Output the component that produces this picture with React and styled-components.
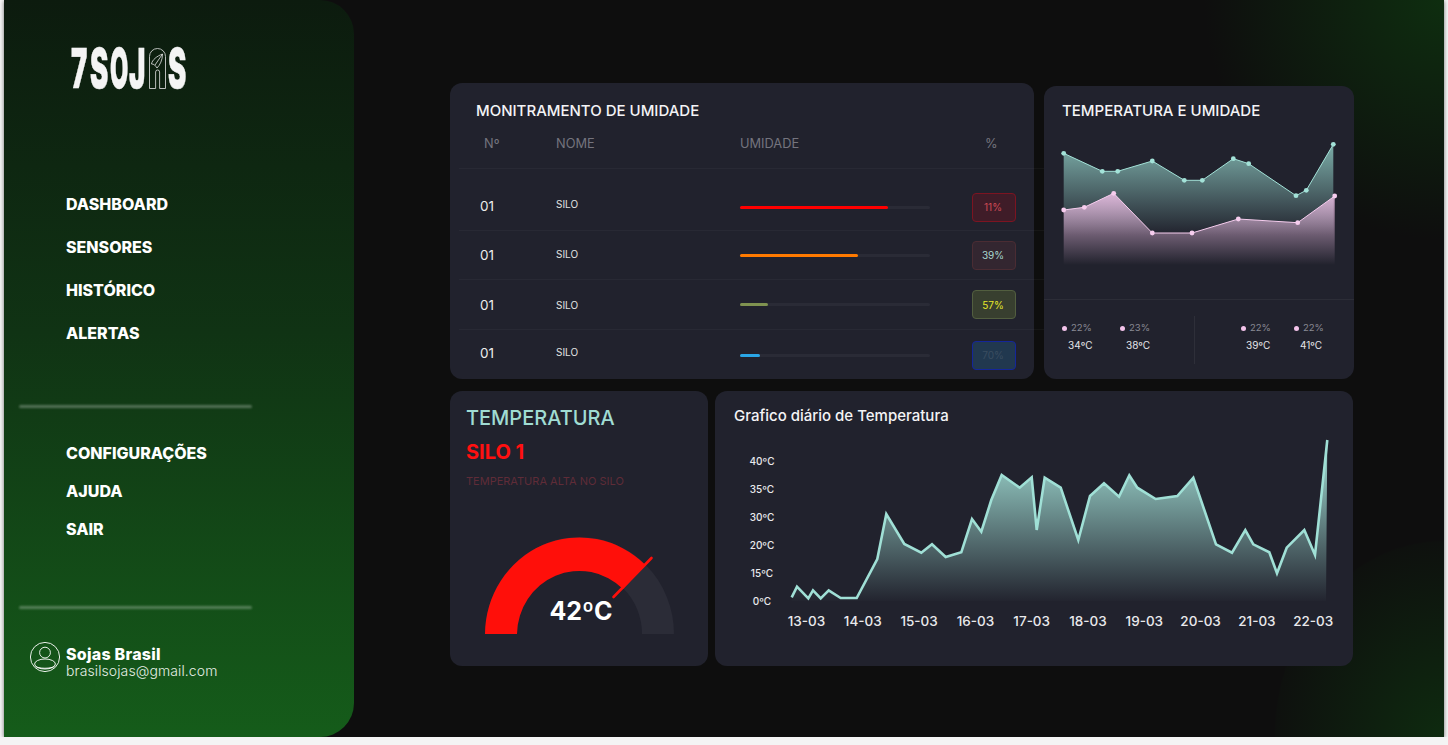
import React from 'react';
import styled, { createGlobalStyle } from 'styled-components';

const GlobalStyle = createGlobalStyle`
  html, body {
    margin: 0;
    padding: 0;
    background: #f4f4f4;
    overflow: hidden;
  }
  body {
    font-family: Inter, "Liberation Sans", sans-serif;
  }
`;

const Frame = styled.div`
  display: flex;
  width: 1440px;
  height: 737px;
  margin-left: 4px;
  box-shadow: 0 1px 4px rgba(0, 0, 0, .55);
  background:
    radial-gradient(circle at 100% 0, rgba(14, 58, 16, .72) 0, rgba(14, 58, 16, 0) 240px),
    radial-gradient(170px 197px at 100% 100%, rgba(14, 52, 16, .75) 0, rgba(14, 52, 16, .07) 99%, rgba(14, 52, 16, 0) 100%),
    #0e0e0e;
`;

const Sidebar = styled.aside`
  flex: none;
  width: 350px;
  height: 737px;
  padding-top: 48px;
  box-sizing: border-box;
  border-radius: 0 34px 34px 0;
  background: linear-gradient(180deg, #0c1b0e 0%, #103314 45%, #155c1a 100%);
`;

const Logo = styled.div`
  display: flex;
  gap: 2.4px;
  margin-left: 67px;
  height: 41px;
`;

const LogoLetter = styled.span`
  display: block;
  width: 17px;
  height: 41px;
  font: 900 55px/41px Inter, sans-serif;
  color: #f4f4f4;
  -webkit-text-stroke: .5px #f4f4f4;
  transform: scaleX(${p => p.$sx});
  transform-origin: 0 50%;
`;

const Nav = styled.nav`
  display: flex;
  flex-direction: column;
  gap: ${p => p.$gap}px;
  margin: ${p => p.$top}px 0 0 62px;
`;

const NavItem = styled.a`
  font-size: 16px;
  line-height: 22px;
  font-weight: 800;
  color: #fff;
`;

const SideRule = styled.div`
  width: 233px;
  height: 3px;
  margin: ${p => p.$top}px 0 0 15px;
  border-radius: 2px;
  background: rgba(255, 255, 255, .28);
  filter: blur(1px);
`;

const User = styled.div`
  display: flex;
  align-items: flex-start;
  gap: 6px;
  margin: 33px 0 0 26px;
`;

const UserText = styled.div`
  display: flex;
  flex-direction: column;
  margin-top: 4px;
`;

const UserName = styled.div`
  font-size: 16px;
  line-height: 16px;
  font-weight: 800;
  letter-spacing: .25px;
  color: #fff;
`;

const UserMail = styled.div`
  font-size: 14px;
  line-height: 17px;
  font-weight: 300;
  letter-spacing: .1px;
  color: #e6efe6;
`;

const Main = styled.main`
  display: flex;
  flex-direction: column;
  padding: 83px 0 0 96px;
`;

const Row = styled.div`
  display: flex;
  align-items: flex-end;
  gap: ${p => p.$gap}px;
  margin-top: ${p => p.$top || 0}px;
`;

const Card = styled.section`
  width: ${p => p.$w}px;
  height: ${p => p.$h}px;
  box-sizing: border-box;
  border-radius: 12px;
  background: #21222d;
`;

const CardTitle = styled.h2`
  margin: 0;
  padding: ${p => p.$pad};
  font-size: ${p => p.$size || 15}px;
  line-height: 18px;
  font-weight: 500;
  color: #f4f4f6;
`;

const TableRow = styled.div`
  display: grid;
  grid-template-columns: 97px 184px 232px 44px;
  align-items: center;
  width: 589px;
  height: ${p => p.$h}px;
  box-sizing: border-box;
  margin-left: 9px;
  padding: ${p => p.$pad || 0}px 0 ${p => p.$padBottom || 0}px;
  border-bottom: ${p => (p.$last ? 'none' : '1px solid rgba(255, 255, 255, .035)')};
`;

const HeadCell = styled.div`
  padding-left: ${p => p.$pad || 0}px;
  font-size: 12.8px;
  color: #74747e;
`;

const NumberCell = styled.div`
  position: relative;
  top: ${p => p.$dy}px;
  padding-left: 21px;
  font-size: 13.5px;
  color: #ececec;
`;

const NameCell = styled.div`
  position: relative;
  top: ${p => p.$dy}px;
  font-size: 10px;
  color: #e2e2e2;
`;

const BarTrack = styled.div`
  width: 190px;
  height: 3px;
  border-radius: 2px;
  background: #2a2b36;
`;

const BarFill = styled.div`
  width: ${p => p.$w}px;
  height: 3px;
  border-radius: 2px;
  background: ${p => p.$color};
`;

const Badge = styled.div`
  display: flex;
  align-items: center;
  justify-content: center;
  width: 44px;
  height: 29px;
  box-sizing: border-box;
  padding-right: 2px;
  border: 1px solid ${p => p.$border};
  border-radius: 4px;
  font-size: 10px;
  color: ${p => p.$color};
  background: ${p => p.$bg};
`;

const ChartSvg = styled.svg`
  display: block;
  margin-top: ${p => p.$top}px;
`;

const Legend = styled.div`
  display: flex;
  height: 80px;
  box-sizing: border-box;
  padding: 16px 0 0 18px;
  border-top: 1px solid rgba(255, 255, 255, .05);
`;

const LegendItem = styled.div`
  width: ${p => p.$w}px;
  padding-top: 5px;
`;

const LegendTop = styled.div`
  display: flex;
  align-items: center;
  gap: 4px;
  font-size: 9.5px;
  line-height: 14px;
  color: #8a8a94;
`;

const Dot = styled.i`
  width: 5px;
  height: 5px;
  border-radius: 50%;
  background: #f3c3ea;
`;

const LegendTemp = styled.div`
  margin: 3px 0 0 ${p => p.$pad}px;
  font-size: 10px;
  line-height: 14px;
  color: #e4e4e8;
`;

const LegendRule = styled.div`
  width: 1px;
  height: 48px;
  margin-right: 46px;
  background: rgba(255, 255, 255, .06);
`;

const GaugeHeading = styled.h2`
  margin: 0;
  padding: 15px 0 0 16px;
  font-size: 20px;
  line-height: 24px;
  font-weight: 500;
  color: #a0dcd3;
`;

const SiloName = styled.div`
  margin: 10px 0 0 16px;
  font-size: 20px;
  line-height: 24px;
  font-weight: 700;
  color: #ff1010;
`;

const SiloNote = styled.div`
  margin: 10px 0 0 16px;
  font-size: 11px;
  line-height: 14px;
  color: #5f2c38;
`;

const GaugeWrap = styled.div`
  position: relative;
  margin-top: 37px;
`;

const GaugeValue = styled.span`
  position: absolute;
  left: 131px;
  top: 86px;
  transform: translate(-50%, -50%);
  font-size: 25px;
  font-weight: 700;
  color: #fff;
`;

const AxisText = styled.text`
  font-family: Inter, sans-serif;
  font-size: ${p => p.$size}px;
  font-weight: 500;
  fill: #e9e9ec;
  text-anchor: middle;
`;

const toLine = pts => pts.map(p => p.join(',')).join(' ');

const rows = [
  { h: 62, pad: 15, numDy: -1, dy: -3, fill: 148, color: '#ff0000', label: '11%', badge: { bg: '#3f1c28', border: '#7c1421', text: '#d04a55' } },
  { h: 49, pad: 0, numDy: 0, dy: -1, fill: 118, color: '#ff7a00', label: '39%', badge: { bg: '#332630', border: '#4a2c33', text: '#a9d6cf' } },
  { h: 50, pad: 0, numDy: 0, dy: 0, fill: 28, color: '#7f9250', label: '57%', badge: { bg: '#383f2f', border: '#525e3f', text: '#e4e82a' } },
  { h: 50, pad: 0, numDy: -2, dy: -3, fill: 20, color: '#2aa6e6', label: '70%', badge: { bg: '#21384f', border: '#14269a', text: '#3a4d60' }, last: true },
];

const teal = [[1063.7, 153.3], [1102.3, 171.3], [1117.7, 171.3], [1152.3, 161], [1184.3, 180.3], [1202.3, 180.3], [1233.3, 158.7], [1248.7, 163.7], [1296, 195.7], [1306.3, 190.3], [1333.3, 144.3]];
const pink = [[1063.7, 210], [1084.3, 207.3], [1113.7, 193.3], [1152.3, 233], [1192, 233], [1238.3, 219], [1297.7, 222.7], [1334.7, 196]];

const daily = [
  [791.7, 597.3], [797, 586.7], [808.3, 598.3], [813, 590.3], [820.7, 598.3], [828.7, 590.3], [840.7, 598], [856.7, 598],
  [877.3, 559], [886.3, 514], [904.3, 544], [921.3, 552.7], [932, 544.3], [945.7, 557], [961.3, 552.3], [972, 519],
  [981.3, 531.7], [991.3, 500], [1001.7, 475], [1019.7, 487.7], [1031.7, 477.3], [1036.7, 530], [1044.7, 477.7],
  [1060.7, 487.7], [1078.3, 540], [1090, 496], [1104, 483.3], [1119, 496.7], [1129.3, 475.3], [1137.3, 487.7],
  [1155.7, 499], [1177.3, 496], [1193.3, 477.7], [1216, 544.3], [1232, 552.7], [1245.3, 530], [1253.3, 544.3],
  [1269.3, 552.3], [1277, 573.3], [1286.7, 547.7], [1304.3, 530], [1315, 555], [1327.3, 440],
];

const yTicks = [['40ºC', 461], ['35ºC', 489], ['30ºC', 517], ['20ºC', 545], ['15ºC', 573], ['0ºC', 601]];
const xTicks = ['13-03', '14-03', '15-03', '16-03', '17-03', '18-03', '19-03', '20-03', '21-03', '22-03'];

function LeafBlock() {
  return (
    <svg width="17" height="41" viewBox="0 0 17 41" fill="none" stroke="#e6e6e6" strokeWidth=".8">
      <path d="M.5 40.5V8.5a8 8 0 0 1 16 0v32H10.6V24a2 2 0 0 0-4 0v16.5z" />
      <path d="M13.5 6C8 8 3 12 2.5 16c2.5 0 3.5 1 5.5 4 3-3 5.5-8 5.5-14zM13.5 6 6 17" />
    </svg>
  );
}

function UserIcon() {
  return (
    <svg width="30" height="30" viewBox="0 0 30 30" fill="none" stroke="#fff" strokeWidth=".9">
      <circle cx="15" cy="15" r="14.6" />
      <circle cx="15" cy="10.6" r="5.4" />
      <ellipse cx="15" cy="22" rx="10.4" ry="5" />
      <path d="M5.4 24c2 3 17 3 19.2 0" />
    </svg>
  );
}

function TempHumidityChart() {
  const tealArea = `1063.7,270 ${toLine(teal)} 1333.3,270`;
  const pinkArea = `1063.7,270 ${toLine(pink)} 1334.7,270`;
  return (
    <ChartSvg $top={10} width="310" height="169" viewBox="1044 130 310 169">
      <defs>
        <linearGradient id="tealFade" gradientUnits="userSpaceOnUse" x1="0" y1="144" x2="0" y2="235">
          <stop offset="0" stopColor="#9adcd2" stopOpacity=".75" />
          <stop offset="1" stopColor="#9adcd2" stopOpacity="0" />
        </linearGradient>
        <linearGradient id="pinkFade" gradientUnits="userSpaceOnUse" x1="0" y1="194" x2="0" y2="265">
          <stop offset="0" stopColor="#f3c3ea" stopOpacity=".85" />
          <stop offset="1" stopColor="#f3c3ea" stopOpacity="0" />
        </linearGradient>
      </defs>
      <polygon points={tealArea} fill="url(#tealFade)" />
      <polygon points={pinkArea} fill="url(#pinkFade)" />
      <polyline points={toLine(teal)} fill="none" stroke="#a3e2d8" strokeWidth="1" />
      <polyline points={toLine(pink)} fill="none" stroke="#f6cdee" strokeWidth="1" />
      {teal.map(([x, y]) => <circle key={x} cx={x} cy={y} r="2.4" fill="#a3e2d8" />)}
      {pink.map(([x, y]) => <circle key={x} cx={x} cy={y} r="2.4" fill="#f6cdee" />)}
    </ChartSvg>
  );
}

function DailyChart() {
  const area = `791.7,601 ${toLine(daily)} 1326,601`;
  return (
    <ChartSvg $top={5} width="638" height="210" viewBox="715 430 638 210">
      <defs>
        <linearGradient id="dailyFade" gradientUnits="userSpaceOnUse" x1="0" y1="470" x2="0" y2="603">
          <stop offset="0" stopColor="#a0dcd3" stopOpacity=".85" />
          <stop offset="1" stopColor="#a0dcd3" stopOpacity="0" />
        </linearGradient>
      </defs>
      <polygon points={area} fill="url(#dailyFade)" />
      <polyline points={toLine(daily)} fill="none" stroke="#a0e0d6" strokeWidth="2.6" />
      {yTicks.map(([label, y]) => (
        <AxisText key={label} $size={10} x="762" y={y + 3.8}>{label}</AxisText>
      ))}
      {xTicks.map((label, i) => (
        <AxisText key={label} $size={13.5} x={806.5 + i * 56.3} y="626">{label}</AxisText>
      ))}
    </ChartSvg>
  );
}

function Gauge() {
  return (
    <GaugeWrap>
      <svg width="258" height="120" viewBox="450 525 258 120" style={{ display: 'block' }}>
        <path d="M485 634A94.5 97 0 0 1 674 634H642A62.5 64 0 0 0 517 634Z" fill="#2b2c37" />
        <path d="M485 634A94.5 97 0 0 1 645 564.5L623 589A62.5 64 0 0 0 517 634Z" fill="#ff0f0a" />
        <line x1="613.5" y1="597" x2="651.5" y2="558" stroke="#ff0f0a" strokeWidth="2.6" strokeLinecap="round" />
      </svg>
      <GaugeValue>42ºC</GaugeValue>
    </GaugeWrap>
  );
}

export default function App() {
  return (
    <>
      <GlobalStyle />
      <Frame>
        <Sidebar>
          <Logo>
            <LogoLetter $sx={.5}>7</LogoLetter>
            <LogoLetter $sx={.5}>S</LogoLetter>
            <LogoLetter $sx={.43}>O</LogoLetter>
            <LogoLetter $sx={.5}>J</LogoLetter>
            <LeafBlock />
            <LogoLetter $sx={.5}>S</LogoLetter>
          </Logo>
          <Nav $gap={21} $top={104}>
            <NavItem>DASHBOARD</NavItem>
            <NavItem>SENSORES</NavItem>
            <NavItem>HISTÓRICO</NavItem>
            <NavItem>ALERTAS</NavItem>
          </Nav>
          <SideRule $top={61} />
          <Nav $gap={16} $top={34}>
            <NavItem>CONFIGURAÇÕES</NavItem>
            <NavItem>AJUDA</NavItem>
            <NavItem>SAIR</NavItem>
          </Nav>
          <SideRule $top={66} />
          <User>
            <UserIcon />
            <UserText>
              <UserName>Sojas Brasil</UserName>
              <UserMail>brasilsojas@gmail.com</UserMail>
            </UserText>
          </User>
        </Sidebar>
        <Main>
          <Row $gap={10}>
            <Card $w={584} $h={296}>
              <CardTitle $pad="19px 0 0 26px">MONITRAMENTO DE UMIDADE</CardTitle>
              <TableRow $h={49} $padBottom={2}>
                <HeadCell $pad={25}>Nº</HeadCell>
                <HeadCell>NOME</HeadCell>
                <HeadCell>UMIDADE</HeadCell>
                <HeadCell $pad={13}>%</HeadCell>
              </TableRow>
              {rows.map((row, i) => (
                <TableRow key={i} $h={row.h} $pad={row.pad} $last={row.last}>
                  <NumberCell $dy={row.numDy}>01</NumberCell>
                  <NameCell $dy={row.dy}>SILO</NameCell>
                  <BarTrack>
                    <BarFill $w={row.fill} $color={row.color} />
                  </BarTrack>
                  <Badge $bg={row.badge.bg} $border={row.badge.border} $color={row.badge.text}>{row.label}</Badge>
                </TableRow>
              ))}
            </Card>
            <Card $w={310} $h={293}>
              <CardTitle $pad="16px 0 0 18px">TEMPERATURA E UMIDADE</CardTitle>
              <TempHumidityChart />
              <Legend>
                <LegendItem $w={58}>
                  <LegendTop><Dot />22%</LegendTop>
                  <LegendTemp $pad={6}>34ºC</LegendTemp>
                </LegendItem>
                <LegendItem $w={74}>
                  <LegendTop><Dot />23%</LegendTop>
                  <LegendTemp $pad={6}>38ºC</LegendTemp>
                </LegendItem>
                <LegendRule />
                <LegendItem $w={53}>
                  <LegendTop><Dot />22%</LegendTop>
                  <LegendTemp $pad={5}>39ºC</LegendTemp>
                </LegendItem>
                <LegendItem $w={50}>
                  <LegendTop><Dot />22%</LegendTop>
                  <LegendTemp $pad={6}>41ºC</LegendTemp>
                </LegendItem>
              </Legend>
            </Card>
          </Row>
          <Row $gap={7} $top={12}>
            <Card $w={258} $h={275}>
              <GaugeHeading>TEMPERATURA</GaugeHeading>
              <SiloName>SILO 1</SiloName>
              <SiloNote>TEMPERATURA ALTA NO SILO</SiloNote>
              <Gauge />
            </Card>
            <Card $w={638} $h={275}>
              <CardTitle $pad="16px 0 0 19px" $size={15}>Grafico diário de Temperatura</CardTitle>
              <DailyChart />
            </Card>
          </Row>
        </Main>
      </Frame>
    </>
  );
}
